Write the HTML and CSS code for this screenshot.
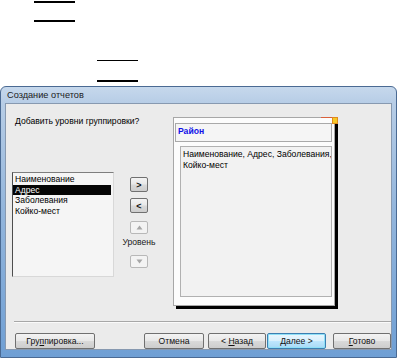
FILE: index.html
```html
<!DOCTYPE html>
<html lang="ru">
<head>
<meta charset="utf-8">
<link rel="stylesheet" href="styles.css">
</head>
<body>
<div class="doc">
  <div class="rule r1"></div>
  <div class="rule r2"></div>
  <div class="rule r3"></div>
  <div class="rule r4"></div>
</div>
<div class="window">
  <div class="titlebar">Создание отчетов</div>
  <div class="client">
    <div class="top">
      <div class="leftcol">
        <div class="question">Добавить уровни группировки?</div>
        <div class="listbox">
          <div class="item">Наименование</div>
          <div class="item selected">Адрес</div>
          <div class="item">Заболевания</div>
          <div class="item">Койко-мест</div>
        </div>
      </div>
      <div class="midcol">
        <div class="btn small">&gt;</div>
        <div class="btn small b2">&lt;</div>
        <div class="btn small dis b3"><svg width="7" height="5" viewBox="0 0 7 5"><path d="M3.5 0.5 L6.5 4.5 L0.5 4.5 Z" fill="#a6a6a6"/></svg></div>
        <div class="level">Уровень</div>
        <div class="btn small dis b4"><svg width="7" height="5" viewBox="0 0 7 5"><path d="M0.5 0.5 L6.5 0.5 L3.5 4.5 Z" fill="#a6a6a6"/></svg></div>
      </div>
      <div class="panel">
        <div class="mark-line"></div>
        <div class="mark-box"></div>
        <div class="header">Район</div>
        <div class="details">Наименование, Адрес, Заболевания,<br>Койко-мест</div>
      </div>
    </div>
    <div class="sep"></div>
    <div class="buttons">
      <div class="btn wide b-group"><span>Гру<u>п</u>пировка...</span></div>
      <div class="btn wide b-cancel"><span>Отмена</span></div>
      <div class="btn wide b-back"><span>&lt; <u>Н</u>азад</span></div>
      <div class="btn wide b-next default"><span><u>Д</u>алее &gt;</span></div>
      <div class="btn wide b-done"><span><u>Г</u>отово</span></div>
    </div>
  </div>
</div>
</body>
</html>
```
FILE: styles.css
```css
html, body {
  margin: 0;
  padding: 0;
  background: #ffffff;
}
body {
  width: 401px;
  height: 358px;
  overflow: hidden;
  font-family: "Liberation Sans", Arial, sans-serif;
  font-size: 8.6px;
  color: #000;
}
.doc {
  height: 86px;
  display: flex;
  flex-direction: column;
}
.rule {
  height: 1.5px;
  width: 41px;
  background: #000;
  flex: none;
}
.r1 { margin: 1px 0 0 34px; }
.r2 { margin: 17.5px 0 0 34px; }
.r3 { margin: 38px 0 0 97px; }
.r4 { margin: 19px 0 0 97px; }

.window {
  width: 397px;
  height: 272px;
  border: 1px solid #4a6a93;
  border-radius: 6px 6px 0 0;
  background: linear-gradient(to bottom, #c6d8ec 0px, #b7cde6 16px, #94b6dc 120px, #6f9fd4 100%);
  padding: 0 4px 6px 4px;
  box-sizing: border-box;
  display: flex;
  flex-direction: column;
}
.titlebar {
  height: 16px;
  line-height: 16px;
  padding-left: 2px;
  font-size: 9.2px;
  color: #1b1b1b;
  flex: none;
}
.client {
  flex: none;
  height: 247px;
  background: #ebebeb;
  border: 1px solid #8799b0;
  box-sizing: border-box;
  display: flex;
  flex-direction: column;
}
.top {
  display: flex;
  height: 214px;
  flex: none;
}
.leftcol {
  width: 110px;
  padding-left: 6px;
  box-sizing: border-box;
  display: flex;
  flex-direction: column;
}
.question {
  margin: 12px 0 0 3px;
  height: 11px;
  line-height: 11px;
  white-space: nowrap;
}
.listbox {
  margin-top: 45px;
  width: 102px;
  height: 105px;
  box-sizing: border-box;
  background: #f5f5f5;
  border: 1px solid #9a9a9a;
  border-left-color: #4e4e4e;
  border-top-color: #7e7e7e;
  border-right-color: #d8d8d8;
  border-bottom-color: #d8d8d8;
  padding: 1px 1px 0 0;
}
.item {
  height: 10.5px;
  line-height: 10.5px;
  padding-left: 2px;
  white-space: nowrap;
}
.item.selected {
  background: #050505;
  color: #fff;
  margin-right: 1px;
}
.midcol {
  width: 46px;
  display: flex;
  flex-direction: column;
  align-items: center;
  padding-top: 73px;
  box-sizing: border-box;
}
.btn {
  box-sizing: border-box;
  border: 1px solid #707070;
  border-radius: 2px;
  background: linear-gradient(to bottom, #f3f3f3 0%, #e8e8e8 48%, #d9d9d9 52%, #cdcdcd 100%);
  display: flex;
  align-items: center;
  justify-content: center;
  white-space: nowrap;
  color: #111;
  flex: none;
}
.btn.small {
  width: 18px;
  height: 15px;
  font-size: 9px;
  font-weight: bold;
}
.btn.b2 { margin-top: 6px; }
.btn.dis {
  border-color: #b8b8b8;
  background: #f3f3f3;
  height: 13px;
}
.btn.b3 { margin-top: 8px; }
.level {
  margin-top: 3px;
  height: 11px;
  line-height: 11px;
  white-space: nowrap;
  color: #1a1a1a;
}
.btn.b4 { margin-top: 7px; }

.panel {
  position: relative;
  margin: 13px 0 0 11px;
  width: 162px;
  height: 189px;
  box-sizing: border-box;
  background: #fcfcfc;
  border: 1px solid #a7a7a7;
  box-shadow: 3px 3px 0 #000;
}
.mark-line {
  position: absolute;
  top: -1px;
  right: 1px;
  width: 12px;
  height: 1px;
  background: #d9603c;
}
.mark-box {
  position: absolute;
  top: -1px;
  right: -4px;
  width: 4px;
  height: 5px;
  background: #f6c927;
  border: 1px solid #e08a1e;
}
.header {
  margin: 5px 2px 0 1px;
  height: 19px;
  box-sizing: border-box;
  background: #f5f5f5;
  border: 1px solid #a9a9a9;
  color: #1010e8;
  font-weight: bold;
  padding: 3px 0 0 2px;
  line-height: 9px;
}
.details {
  margin: 4px 2px 0 6px;
  height: 151px;
  box-sizing: border-box;
  background: #f2f2f2;
  border: 1px solid #b1b1b1;
  padding: 2px 0 0 2px;
  line-height: 10.5px;
  white-space: nowrap;
  overflow: hidden;
}
.sep {
  margin: 3px 0 0 8px;
  height: 1px;
  background: #a7a7a7;
  border-bottom: 1px solid #fafafa;
  flex: none;
}
.buttons {
  display: flex;
  margin-top: 10px;
}
.btn.wide {
  height: 16px;
}
.b-group { margin-left: 9px; width: 80px; }
.b-cancel { margin-left: 49px; width: 60px; }
.b-back { margin-left: 4px; width: 58px; }
.b-next { margin-left: 1px; width: 59px; }
.b-done { margin-left: 7px; width: 58px; }
.btn.default {
  border-color: #3c7fb1;
  box-shadow: inset 0 0 0 1px #8fe0f7;
  background: linear-gradient(to bottom, #eaf6fd 0%, #d9f0fc 48%, #bee6fd 52%, #a7d9f5 100%);
}
u {
  text-decoration: underline;
  text-underline-offset: 1px;
}
```
